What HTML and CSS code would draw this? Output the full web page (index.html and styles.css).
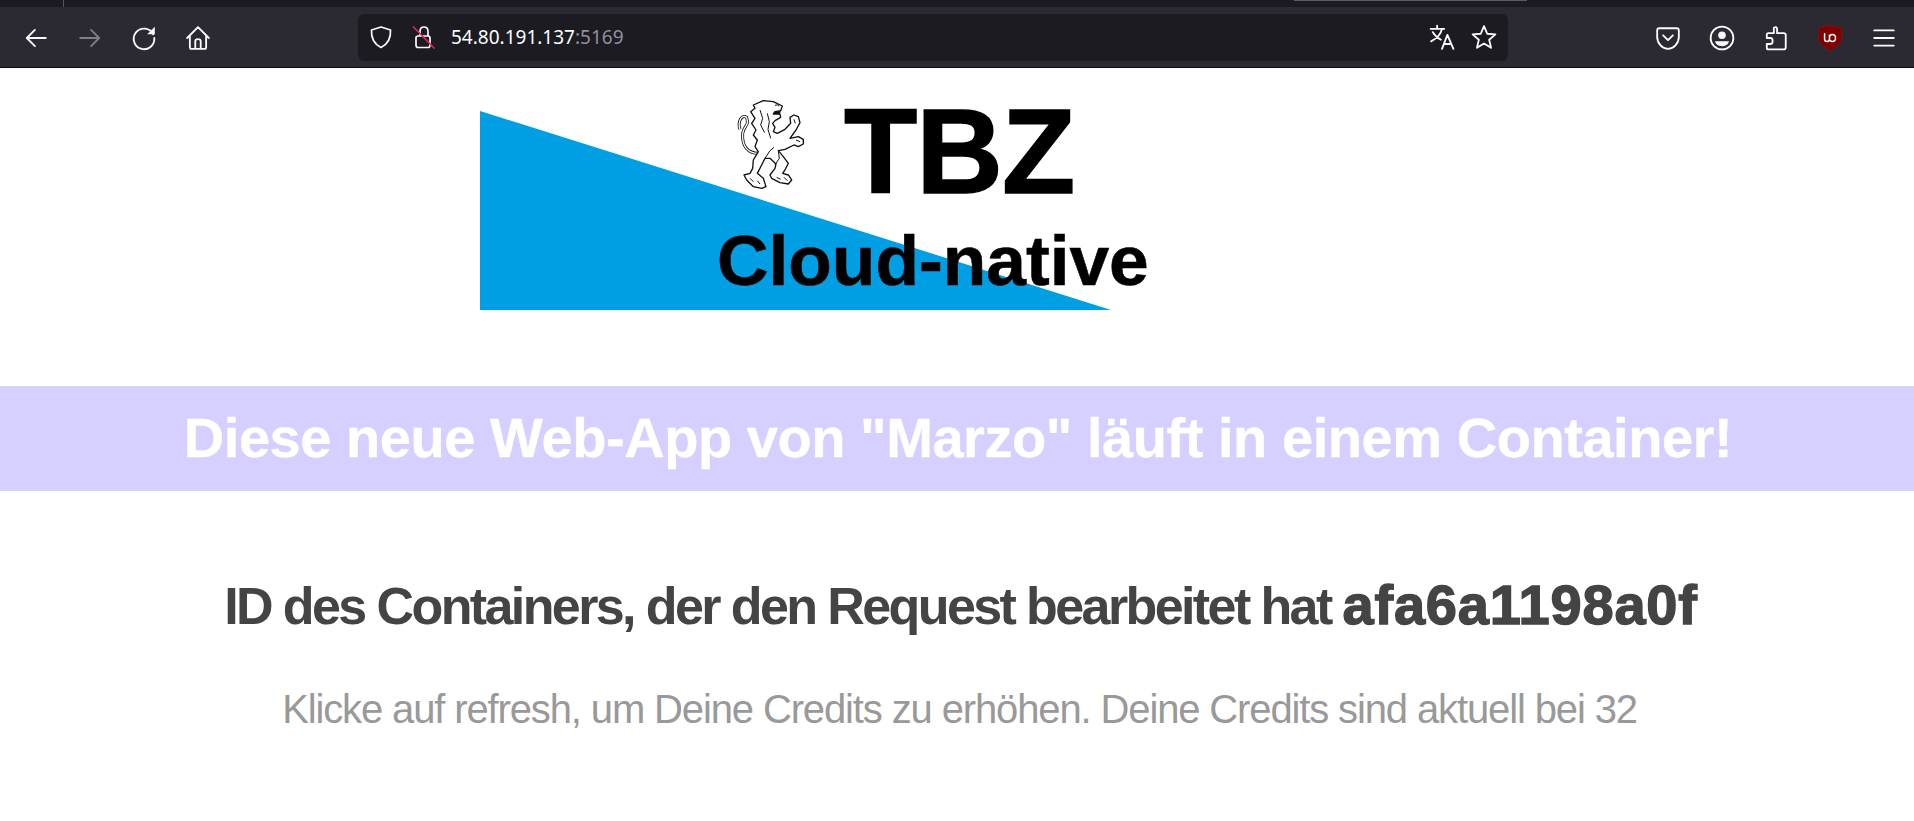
FILE: index.html
```html
<!DOCTYPE html>
<html lang="de">

<head>
    <meta charset="UTF-8">
    <title>TBZ Cloud-native</title>
    <link rel="stylesheet" href="styles.css">
</head>

<body>
    <div class="tab-strip">
        <span class="tab-divider"></span>
        <span class="tab-edge"></span>
    </div>

    <header class="toolbar">
        <nav class="nav-buttons">
            <svg class="icon" viewBox="0 0 24 24"><path d="M21 12H4M11 4.500L3.500 12L11 19.500" /></svg>
            <svg class="icon dim" viewBox="0 0 24 24"><path d="M3 12H20M13 4.500L20.500 12L13 19.500" /></svg>
            <svg class="icon" viewBox="0 0 24 24"><path d="M20.500 8.500A9.500 9.500 0 1 0 21.500 12" /><path class="solid" d="M15 8.500H22V1.500Z" /></svg>
            <svg class="icon" viewBox="0 0 24 24"><path d="M2 12L12 2L22 12M4.500 10V20.500Q4.500 22 6 22H18Q19.500 22 19.500 20.500V10M9.500 22V15Q9.500 13 12 13Q14.500 13 14.500 15V22" /></svg>
        </nav>

        <div class="url-bar">
            <svg class="icon url-icon" viewBox="0 0 24 24"><path d="M12 2L21.500 5C22 13 19 19 12 22.500C5 19 2 13 2.500 5Z" /></svg>
            <svg class="icon url-icon" viewBox="0 0 24 24"><path d="M8 11V6.500Q8 2 12 2Q16 2 16 6.500V11M4 13Q4 11 6 11H16Q18 11 18 13V20Q18 22.500 16 22.500H6Q4 22.500 4 20Z" /><path class="slash" d="M1.500 2L22 23" /></svg>
            <span class="url-text">54.80.191.137<span class="url-port">:5169</span></span>
            <div class="url-actions">
                <svg class="icon" viewBox="0 0 24 24"><path d="M1.500 4.500H14M7.500 1.500V4.500M12 4.500C11 9 7 13.500 2 16M3.500 7.500C5.500 11 8 13 11 14.500M12 23L17 10L22.500 23M14 18.500H20.500" /></svg>
                <svg class="icon" viewBox="0 0 24 24"><path d="M12 2L15 9L22.500 9.600L16.800 14.500L18.500 22L12 18L5.500 22L7.200 14.500L1.500 9.600L9 9Z" /></svg>
            </div>
        </div>

        <nav class="tool-buttons">
            <svg class="icon" viewBox="0 0 24 24"><path d="M4 3H20Q22 3 22 5V11C22 17 17 22 12 22C7 22 2 17 2 11V5Q2 3 4 3ZM7.500 9.500L12 14L16.500 9.500" /></svg>
            <svg class="icon" viewBox="0 0 24 24"><circle cx="12" cy="12" r="10.500" /><circle class="solid" cx="12" cy="9.500" r="3.500" /><path class="solid" d="M5.500 15H18.500C17.500 18.500 15 19.500 12 19.500C9 19.500 6.500 18.500 5.500 15Z" /></svg>
            <svg class="icon" viewBox="0 0 24 24"><path d="M10 2.500Q13 1 13 4V7.500H19Q21 7.500 21 9.500V20.500Q21 22.500 19 22.500H5Q3.500 22.500 3.500 21V17.500H7C9.500 17.500 9.500 12 7 12H3.500V9Q3.500 7.500 5 7.500H10Z" /></svg>
            <svg class="icon" viewBox="0 0 24 24"><path class="shield" d="M12 0.500L22.500 3V14C21 18 16 21 12 24C8 21 3 18 1.500 14V3Z" /><path class="shield-mark" d="M7 8V13C7 16 11.500 16 11.500 13V9.500M11.500 12A2.800 2.800 0 1 0 17 12A2.800 2.800 0 1 0 11.500 12" /></svg>
            <svg class="icon" viewBox="0 0 24 24"><path d="M3 5H21M3 12H21M3 19H21" /></svg>
        </nav>
    </header>

    <main class="page">
        <svg class="logo" viewBox="0 0 670 200">
            <polygon class="logo-wedge" points="0,0 631,199 0,199" />
            <!-- Zuercher Loewe -->
            <g transform="translate(240 -21) scale(.3333)">
                <path class="lion-line" d="M115 190C85 190 65 170 68 130C72 105 88 110 80 82C65 72 52 95 60 118" />
                <path class="lion-inner" d="M115 190C85 190 65 170 68 130C72 105 88 110 80 82C65 72 52 95 60 118" />
                <path class="lion" d="M100 45L130 32L160 35L187 48L182 62L165 65L160 72L180 72L182 82L165 92L158 100L165 112L160 125L172 130L195 118L212 100L210 82L222 75L235 80L240 98L228 120L210 145L235 140L250 148L250 162L235 170L222 165L195 178L175 182L190 200L205 220L195 240L188 250L205 255L215 270L205 282L180 278L155 265L150 255L165 235L168 222L150 205L135 205L125 225L112 250L130 265L138 290L125 295L100 290L80 270L72 255L90 250L98 235L100 210L115 185L105 170L112 150L100 135L108 120L95 100L105 85L92 65L105 55Z" />
                <path class="lion-detail" d="M120 60L128 85L122 105L134 128M142 70L148 95L144 118L152 145M165 46Q172 42 177 48M165 225L178 205L175 182M135 205L150 182L162 172M222 88L226 100M228 150L240 155M90 265L100 275M112 272L120 282M170 262L182 268M192 262L202 272" />
                <path class="lion-mouth" d="M165 65L182 62L180 72L160 72Z" />
            </g>
            <text class="logo-title" x="364" y="82">TBZ</text>
            <text class="logo-sub" x="237" y="174">Cloud-native</text>
        </svg>

        <h1 class="banner">Diese neue Web-App von "Marzo" läuft in einem Container!</h1>
        <h2 class="container-id">ID des Containers, der den Request bearbeitet hat <b>afa6a1198a0f</b></h2>
        <p class="credits">Klicke auf refresh, um Deine Credits zu erhöhen. Deine Credits sind aktuell bei 32</p>
    </main>
</body>

</html>
```

FILE: styles.css
```css
/* Reset and base styles */
* {
    margin: 0;
    padding: 0;
    box-sizing: border-box;
}

html,
body {
    height: 100%;
    overflow: hidden;
}

body {
    background-color: white;
    font-family: 'Liberation Sans', Arial, sans-serif;
}

/* Browser chrome */
.tab-strip {
    position: relative;
    height: 7px;
    background-color: #1c1b22;
}

.tab-divider {
    position: absolute;
    left: 63px;
    top: 0;
    width: 1px;
    height: 7px;
    background-color: #55545c;
}

.tab-edge {
    position: absolute;
    left: 1294px;
    top: 0;
    width: 233px;
    height: 1px;
    background-color: #5b5b66;
}

.toolbar {
    display: flex;
    align-items: center;
    height: 61px;
    padding-top: 1px;
    background-color: #2b2a33;
    border-bottom: 1px solid #0c0c0d;
}

.icon {
    display: block;
    width: 26px;
    height: 26px;
    flex-shrink: 0;
    fill: none;
    stroke: #fbfbfe;
    stroke-width: 1.700;
    stroke-linecap: round;
    stroke-linejoin: round;
}

.icon.dim {
    opacity: 0.4;
}

.icon .solid {
    fill: #fbfbfe;
    stroke: none;
}

.icon .slash {
    stroke: #e22850;
}

.icon .shield {
    fill: #800000;
    stroke: #a01010;
    stroke-width: 0.500;
}

.icon .shield-mark {
    stroke-width: 1.400;
}

.nav-buttons {
    display: flex;
    gap: 28px;
    width: 358px;
    padding-left: 23px;
}

.url-bar {
    display: flex;
    align-items: center;
    width: 1150px;
    height: 47px;
    margin-top: -1px;
    padding: 0 11px;
    background-color: #1c1b22;
    border-radius: 6px;
}

.url-icon {
    width: 24px;
    height: 24px;
    margin-right: 19px;
}

.url-text {
    margin-left: -4px;
    color: #fbfbfe;
    font-family: 'Noto Sans', sans-serif;
    font-size: 19px;
}

.url-port {
    color: #8f8f9d;
}

.url-actions {
    display: flex;
    gap: 16px;
    margin-left: auto;
}

.tool-buttons {
    display: flex;
    gap: 28px;
    margin-left: 147px;
}

/* Page content */
.page {
    text-align: center;
}

.logo {
    display: block;
    width: 670px;
    height: 200px;
    margin: 43px 0 0 480px;
    overflow: visible;
}

.logo-wedge {
    fill: #009fe3;
}

.logo-title {
    font-size: 120px;
    font-weight: 700;
    letter-spacing: -1px;
    stroke: #000;
    stroke-width: 1.500px;
}

.logo-sub {
    font-size: 71.300px;
    font-weight: 700;
    stroke: #000;
    stroke-width: 0.600px;
}

.lion {
    fill: white;
    stroke: #111;
    stroke-width: 4;
    stroke-linejoin: round;
}

.lion-line {
    fill: none;
    stroke: #111;
    stroke-width: 9;
}

.lion-inner {
    fill: none;
    stroke: white;
    stroke-width: 4;
}

.lion-detail {
    fill: none;
    stroke: #111;
    stroke-width: 3;
}

.lion-mouth {
    fill: #111;
}

.banner {
    margin-top: 75px;
    padding: 19px 0 21px 2px;
    background-color: #d5d0ff;
    color: white;
    font-size: 56px;
    font-weight: 700;
    line-height: 65px;
    letter-spacing: -0.450px;
    -webkit-text-stroke: 0.400px white;
}

.container-id {
    margin-top: 84px;
    padding-left: 8px;
    color: #444;
    font-size: 52px;
    font-weight: 700;
    line-height: 60px;
    letter-spacing: -2.600px;
}

.container-id b {
    font-size: 56px;
    letter-spacing: 0.800px;
    -webkit-text-stroke: 1.400px #444;
}

.credits {
    margin-top: 50px;
    padding-left: 5px;
    color: #999;
    font-size: 40px;
    line-height: 46px;
    letter-spacing: -1.130px;
}
```
